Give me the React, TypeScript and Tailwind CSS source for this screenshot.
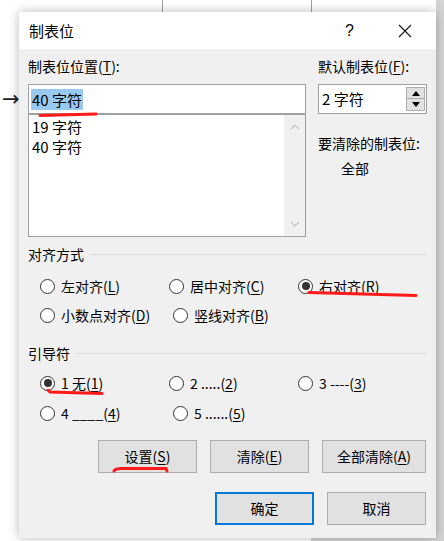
import React from 'react';

const font = "font-['Microsoft_YaHei_UI','Noto_Sans_CJK_SC',sans-serif]";

// label with an underlined access key, e.g. 左对齐(L)
function Key({ text, k, tail = ')' }: { text: string; k: string; tail?: string }) {
    return (
        <span>
            {text}(<span className="underline underline-offset-2">{k}</span>{tail}
        </span>
    );
}

function Radio({ children, checked = false }: { children: React.ReactNode; checked?: boolean }) {
    return (
        <div className="flex items-center gap-[6px] h-5 w-[133px] text-[14px]">
            <span className="w-[15px] h-[15px] shrink-0 rounded-full border border-[#333] bg-white flex items-center justify-center">
                {checked && <span className="w-[8px] h-[8px] rounded-full bg-[#333]" />}
            </span>
            {children}
        </div>
    );
}

function GroupTitle({ title }: { title: string }) {
    return (
        <div className="flex items-center gap-[6px] h-5 text-[14px]">
            <span>{title}</span>
            <div className="flex-1 h-px bg-[#dcdcdc]" />
        </div>
    );
}

function Btn({ children, w, primary = false }: { children: React.ReactNode; w: string; primary?: boolean }) {
    return (
        <div
            className={`${w} h-[33px] flex items-center justify-center bg-[#e1e1e1] text-[14px] ${
                primary ? 'border-2 border-[#0078d7]' : 'border border-[#adadad]'
            }`}
        >
            {children}
        </div>
    );
}

export default function App() {
    return (
        <div className={`relative w-[444px] h-[541px] bg-white overflow-hidden text-black ${font}`}>
            {/* desktop behind the dialog */}
            <div className="absolute left-[162px] top-0 w-px h-[14px] bg-[#a0a0a0]" />
            <div className="absolute left-[311px] top-0 w-px h-[14px] bg-[#a0a0a0]" />
            <div className="absolute left-[311px] top-[536px] w-px h-[5px] bg-[#a0a0a0]" />
            <div className="absolute right-0 top-0 w-[8px] h-full bg-[#d4d4d4]" />
            <div className="absolute left-[311px] bottom-0 w-[133px] h-[4px] bg-[#d4d4d4]" />
            <div className="absolute left-[2px] top-[85px] text-[21px] leading-7 font-['DejaVu_Sans',sans-serif] text-[#222]">→</div>

            {/* dialog */}
            <div className="relative ml-[19px] mt-[12px] w-[417px] h-[526px] flex flex-col bg-[#f0f0f0] shadow-[0_0_10px_rgba(0,0,0,0.28)]">
                <div className="h-[37px] bg-white flex items-center pl-[10px] pr-[24px] text-[15px]">
                    <span className="flex-1 pt-px">制表位</span>
                    <span className="text-[16px] mr-[44px] font-['Liberation_Sans',sans-serif]">?</span>
                    <svg width="14" height="14" viewBox="0 0 14 14">
                        <path d="M1 1 L13 13 M13 1 L1 13" stroke="#111" strokeWidth="1.1" />
                    </svg>
                </div>

                <div className="flex-1 flex flex-col px-[9px] pt-[7px] pb-[13px]">
                    <div className="flex gap-[12px]">
                        {/* left column */}
                        <div className="w-[278px] flex flex-col">
                            <div className="h-5 text-[14px] leading-5">
                                <Key text="制表位位置" k="T" tail="):" />
                            </div>
                            <div className="mt-[8px] h-[30px] border border-[#a0a0a0] bg-white flex items-center pl-[2px] text-[15px]">
                                <span className="bg-[#99c9ef] px-[1px] h-[21px] leading-[21px]">40 字符</span>
                            </div>
                            <div className="h-[123px] border border-[#a0a0a0] bg-white flex text-[15px]">
                                <div className="flex-1 pl-[3px] pt-[2px] leading-5">
                                    <div>19 字符</div>
                                    <div>40 字符</div>
                                </div>
                                <div className="w-[21px] bg-[#f0f0f0] flex flex-col items-center justify-between py-[9px]">
                                    <svg width="10" height="6" viewBox="0 0 10 6">
                                        <path d="M1 5 L5 1 L9 5" fill="none" stroke="#c2c2c2" strokeWidth="1.2" />
                                    </svg>
                                    <svg width="10" height="6" viewBox="0 0 10 6">
                                        <path d="M1 1 L5 5 L9 1" fill="none" stroke="#c2c2c2" strokeWidth="1.2" />
                                    </svg>
                                </div>
                            </div>
                        </div>

                        {/* right column */}
                        <div className="flex-1 flex flex-col">
                            <div className="h-5 text-[14px] leading-5">
                                <Key text="默认制表位" k="F" tail="):" />
                            </div>
                            <div className="mt-[8px] h-[30px] border border-[#a0a0a0] bg-white flex items-center pl-[3px] pr-[1px] text-[15px]">
                                <span className="flex-1">2 字符</span>
                                <div className="flex flex-col w-[19px]">
                                    <div className="h-[12px] bg-[#e1e1e1] border border-[#adadad] flex items-center justify-center">
                                        <svg width="8" height="5" viewBox="0 0 8 5"><path d="M0 5 L4 0 L8 5Z" fill="#000" /></svg>
                                    </div>
                                    <div className="h-[12px] bg-[#e1e1e1] border border-t-0 border-[#adadad] flex items-center justify-center">
                                        <svg width="8" height="5" viewBox="0 0 8 5"><path d="M0 0 L4 5 L8 0Z" fill="#000" /></svg>
                                    </div>
                                </div>
                            </div>
                            <div className="mt-[19px] h-5 leading-5 text-[14px]">要清除的制表位:</div>
                            <div className="mt-[5px] h-5 leading-5 text-[14px] pl-[23px]">全部</div>
                        </div>
                    </div>

                    <div className="mt-[7px]">
                        <GroupTitle title="对齐方式" />
                    </div>
                    <div className="pl-[12px] mt-[12px] flex flex-col gap-[9px]">
                        <div className="flex">
                            <Radio><Key text="左对齐" k="L" /></Radio>
                            <Radio><Key text="居中对齐" k="C" /></Radio>
                            <Radio checked><Key text="右对齐" k="R" /></Radio>
                        </div>
                        <div className="flex">
                            <Radio><Key text="小数点对齐" k="D" /></Radio>
                            <Radio><Key text="竖线对齐" k="B" /></Radio>
                        </div>
                    </div>

                    <div className="mt-[18px]">
                        <GroupTitle title="引导符" />
                    </div>
                    <div className="pl-[12px] mt-[10px] flex flex-col gap-[10px]">
                        <div className="flex">
                            <Radio checked><Key text="1 无" k="1" /></Radio>
                            <Radio><Key text="2 ....." k="2" /></Radio>
                            <Radio><Key text="3 ----" k="3" /></Radio>
                        </div>
                        <div className="flex">
                            <Radio><Key text="4 ____" k="4" /></Radio>
                            <Radio><Key text="5 ......" k="5" /></Radio>
                        </div>
                    </div>

                    <div className="mt-[17px] flex justify-end gap-[13px] pr-px">
                        <Btn w="w-[99px]"><Key text="设置" k="S" /></Btn>
                        <Btn w="w-[99px]"><Key text="清除" k="E" /></Btn>
                        <Btn w="w-[104px]"><Key text="全部清除" k="A" /></Btn>
                    </div>
                    <div className="mt-[19px] flex justify-end gap-[13px] pr-px">
                        <Btn w="w-[99px]" primary>确定</Btn>
                        <Btn w="w-[99px]">取消</Btn>
                    </div>
                </div>
            </div>

            {/* red annotation strokes */}
            <svg className="absolute inset-0 pointer-events-none" width="444" height="541">
                <g stroke="#ff1a1a" strokeWidth="3" fill="none" strokeLinecap="round">
                    <path d="M40 115.5 L96 114" />
                    <path d="M309 292.5 Q360 294 416 295.5" />
                    <path d="M48 390 L50 392 L102 393.5" />
                    <path d="M114 471 Q115 469 120 468.5 L166 468.5 L167 471" />
                </g>
            </svg>
        </div>
    );
}
